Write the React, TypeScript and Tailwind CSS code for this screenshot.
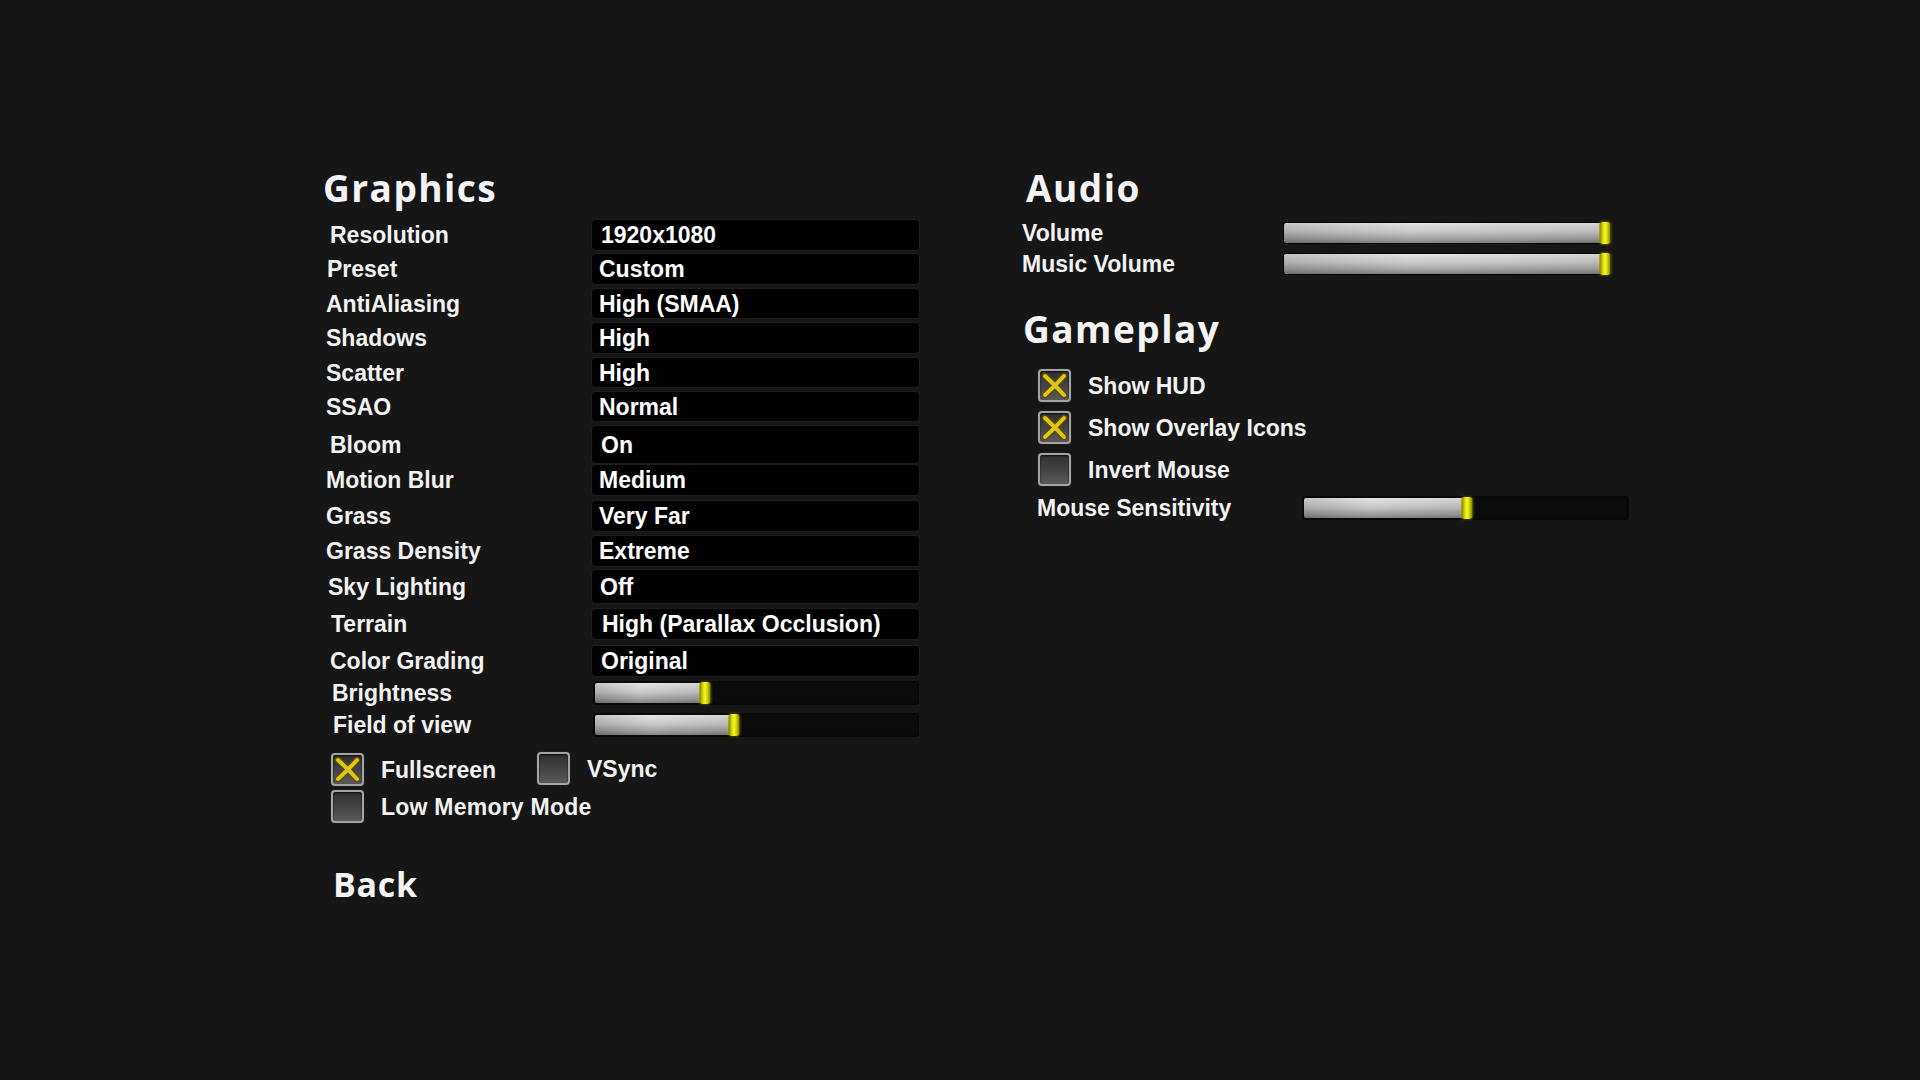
import React from "react";

type Row = {
    label: string;
    value?: string;
    slider?: number;
    mt: string;
    h: string;
    pl: string;
    vpl: string;
};

const rows: Row[] = [
    { label: "Resolution", value: "1920x1080", mt: "mt-[14px]", h: "h-[30px]", pl: "pl-[8px]", vpl: "pl-[9px]" },
    { label: "Preset", value: "Custom", mt: "mt-[4px]", h: "h-[30px]", pl: "pl-[5px]", vpl: "pl-[7px]" },
    { label: "AntiAliasing", value: "High (SMAA)", mt: "mt-[5px]", h: "h-[29px]", pl: "pl-[4px]", vpl: "pl-[7px]" },
    { label: "Shadows", value: "High", mt: "mt-[5px]", h: "h-[30px]", pl: "pl-[4px]", vpl: "pl-[7px]" },
    { label: "Scatter", value: "High", mt: "mt-[5px]", h: "h-[29px]", pl: "pl-[4px]", vpl: "pl-[7px]" },
    { label: "SSAO", value: "Normal", mt: "mt-[5px]", h: "h-[29px]", pl: "pl-[4px]", vpl: "pl-[7px]" },
    { label: "Bloom", value: "On", mt: "mt-[5px]", h: "h-[37px]", pl: "pl-[8px]", vpl: "pl-[9px]" },
    { label: "Motion Blur", value: "Medium", mt: "mt-[2px]", h: "h-[30px]", pl: "pl-[4px]", vpl: "pl-[7px]" },
    { label: "Grass", value: "Very Far", mt: "mt-[6px]", h: "h-[30px]", pl: "pl-[4px]", vpl: "pl-[7px]" },
    { label: "Grass Density", value: "Extreme", mt: "mt-[5px]", h: "h-[30px]", pl: "pl-[4px]", vpl: "pl-[7px]" },
    { label: "Sky Lighting", value: "Off", mt: "mt-[4px]", h: "h-[33px]", pl: "pl-[6px]", vpl: "pl-[8px]" },
    { label: "Terrain", value: "High (Parallax Occlusion)", mt: "mt-[6px]", h: "h-[30px]", pl: "pl-[9px]", vpl: "pl-[10px]" },
    { label: "Color Grading", value: "Original", mt: "mt-[7px]", h: "h-[30px]", pl: "pl-[8px]", vpl: "pl-[9px]" },
    { label: "Brightness", slider: 0.34, mt: "mt-[5px]", h: "h-[24px]", pl: "pl-[10px]", vpl: "" },
    { label: "Field of view", slider: 0.43, mt: "mt-[8px]", h: "h-[24px]", pl: "pl-[11px]", vpl: "" },
];

const heading = "font-['Open_Sans',sans-serif] font-bold text-[37px] leading-[36px] h-[36px] tracking-[0.04em] text-[#f4f4f4]";

function Knob() {
    return (
        <div className="absolute top-[-1px] bottom-[-1px] w-[11px] -translate-x-1/2 rounded-[3px] bg-[linear-gradient(to_right,#7c7a00,#d9d900_30%,#f4f43a_50%,#d9d900_70%,#7c7a00)] shadow-[0_0_3px_rgba(220,220,0,0.6)]" />
    );
}

function Slider({ value, bordered, w }: { value: number; bordered?: boolean; w: string }) {
    return (
        <div
            className={`relative h-full ${w} rounded-[3px] ${
                bordered ? "bg-black p-[1px]" : "bg-[#0b0b0b] shadow-[inset_0_0_4px_rgba(0,0,0,0.9),0_0_1px_#262626] py-[2px] pl-[2px]"
            }`}
        >
            <div className="relative h-full">
                <div
                    className="h-full rounded-[2px] bg-[linear-gradient(to_bottom,#e2e2e2,#c4c4c4_45%,#9a9a9a_80%,#7a7a7a)]"
                    style={{ width: `${value * 100}%` }}
                />
                <div className="absolute inset-0 pointer-events-none" style={{ width: `${value * 100}%` }}>
                    <div className="h-full w-full bg-[linear-gradient(to_right,rgba(0,0,0,0.12),rgba(255,255,255,0.08)_40%,rgba(0,0,0,0.06))]" />
                </div>
                <div className="absolute top-0 bottom-0" style={{ left: `${value * 100}%` }}>
                    <Knob />
                </div>
            </div>
        </div>
    );
}

function Check({ checked }: { checked?: boolean }) {
    return (
        <div className="relative w-[33px] h-[33px] shrink-0 rounded-[4px] border-2 border-[#a4a4a4] bg-[linear-gradient(to_bottom,#2f2f2f,#474747_60%,#5a5a5a)] shadow-[inset_0_1px_2px_rgba(0,0,0,0.8),0_0_1px_rgba(255,255,255,0.3)]">
            {checked && (
                <svg viewBox="0 0 29 29" className="absolute inset-0 w-full h-full">
                    <path d="M5 5 Q14.5 13.5 24 24 M24 5 Q14.5 15.5 5 24" stroke="#5a4c00" strokeWidth="6.4" strokeLinecap="round" fill="none" />
                    <path d="M5 5 Q14.5 13.5 24 24 M24 5 Q14.5 15.5 5 24" stroke="#dfc41a" strokeWidth="4" strokeLinecap="round" fill="none" />
                </svg>
            )}
        </div>
    );
}

const text = "font-['Liberation_Sans',Arial,sans-serif] font-bold text-[23px] leading-[26px] text-[#f2f2f2]";

export default function App() {
    return (
        <div className="w-full h-screen bg-[#161616] overflow-hidden">
            <div className="flex pl-[322px] pt-[170px]">
                {/* Graphics */}
                <div className="w-[700px] shrink-0">
                    <div className={`${heading} pl-[1px]`}>Graphics</div>
                    {rows.map((r) => (
                        <div key={r.label} className={`flex items-center ${r.mt} ${r.h}`}>
                            <div className={`w-[270px] ${r.pl} ${text}`}>{r.label}</div>
                            {r.slider !== undefined ? (
                                <div className="h-full pl-[1px]">
                                    <Slider value={r.slider} w="w-[326px]" />
                                </div>
                            ) : (
                                <div
                                    className={`w-[327px] h-full flex items-center bg-black rounded-[4px] shadow-[0_0_1px_1px_#1f1f1f] ${r.vpl} ${text} text-white`}
                                >
                                    {r.value}
                                </div>
                            )}
                        </div>
                    ))}

                    <div className="mt-[16px] pl-[9px] flex flex-col gap-[4px]">
                        <div className="flex items-center">
                            <div className="w-[206px] flex items-center gap-[17px]">
                                <Check checked />
                                <span className={text}>Fullscreen</span>
                            </div>
                            <div className="flex items-center gap-[17px] -mt-[2px]">
                                <Check />
                                <span className={text}>VSync</span>
                            </div>
                        </div>
                        <div className="flex items-center gap-[17px]">
                            <Check />
                            <span className={`${text} tracking-[0.01em]`}>Low Memory Mode</span>
                        </div>
                    </div>

                    <div className="font-['Open_Sans',sans-serif] font-bold text-[34px] leading-[36px] h-[36px] tracking-[0.02em] text-[#f4f4f4] mt-[43px] pl-[11px]">
                        Back
                    </div>
                </div>

                {/* Audio + Gameplay */}
                <div className="w-[620px]">
                    <div className={`${heading} pl-[4px]`}>Audio</div>
                    <div className="flex items-center mt-[16px] h-[22px]">
                        <div className={`w-[261px] ${text}`}>Volume</div>
                        <Slider value={0.985} bordered w="w-[328px]" />
                    </div>
                    <div className="flex items-center mt-[9px] h-[22px]">
                        <div className={`w-[261px] ${text}`}>Music Volume</div>
                        <Slider value={0.985} bordered w="w-[328px]" />
                    </div>

                    <div className={`${heading} mt-[36px] pl-[1px]`}>Gameplay</div>
                    <div className="mt-[22px] pl-[16px] flex flex-col gap-[9px]">
                        <div className="flex items-center gap-[17px]">
                            <Check checked />
                            <span className={text}>Show HUD</span>
                        </div>
                        <div className="flex items-center gap-[17px]">
                            <Check checked />
                            <span className={text}>Show Overlay Icons</span>
                        </div>
                        <div className="flex items-center gap-[17px]">
                            <Check />
                            <span className={text}>Invert Mouse</span>
                        </div>
                    </div>
                    <div className="flex items-center mt-[10px] h-[24px]">
                        <div className={`w-[280px] pl-[15px] ${text}`}>Mouse Sensitivity</div>
                        <Slider value={0.5} w="w-[327px]" />
                    </div>
                </div>
            </div>
        </div>
    );
}
